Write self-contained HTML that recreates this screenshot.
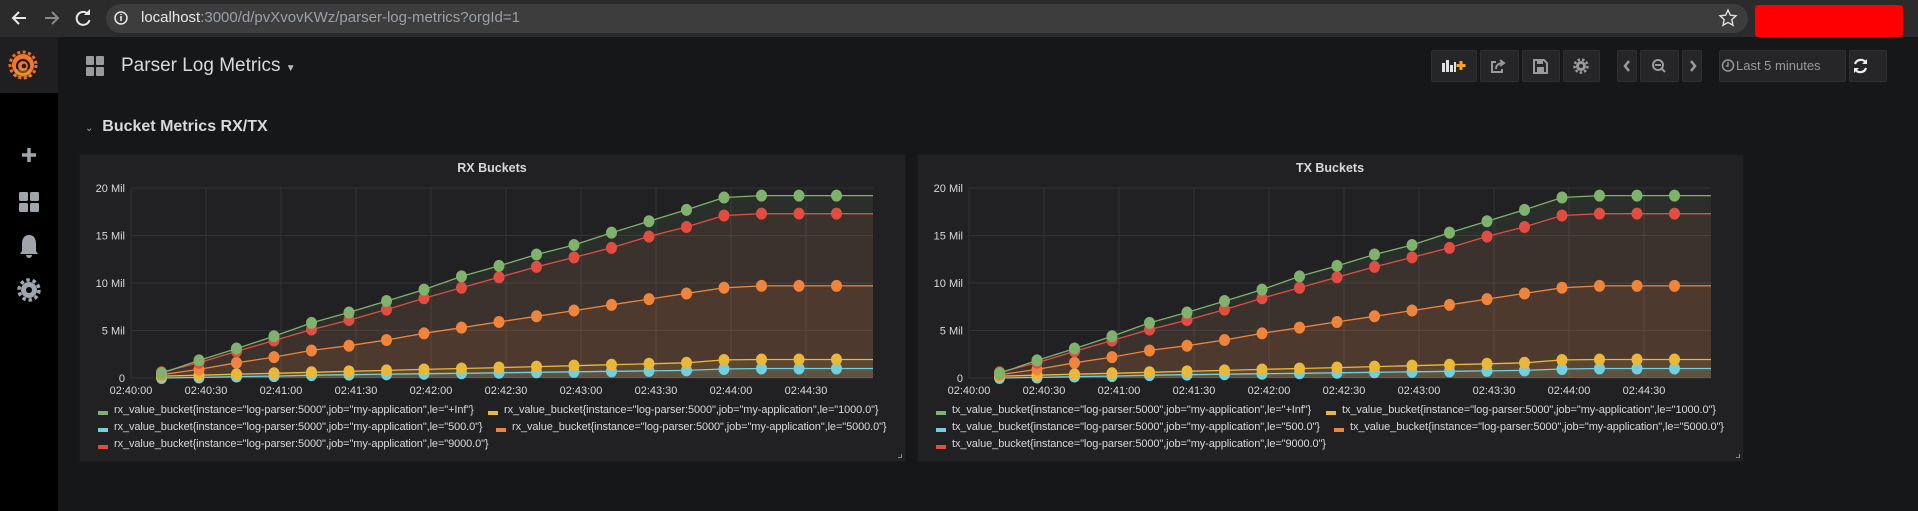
<!DOCTYPE html>
<html><head><meta charset="utf-8"><style>
*{margin:0;padding:0;box-sizing:border-box}
body{width:1918px;height:511px;overflow:hidden;background:#161719;font-family:"Liberation Sans",sans-serif;position:relative}
.abs{position:absolute}
.btn{position:absolute;top:50px;height:32px;background:#262628;border:1px solid #2f2f32;border-radius:2px}
</style></head><body>
<!-- browser bar -->
<div class="abs" style="left:0;top:0;width:1918px;height:37px;background:#2b2b2c"></div>
<div class="abs" style="left:106px;top:4px;width:1642px;height:29px;background:#3d3d3e;border-radius:15px"></div>
<svg class="abs" style="left:0;top:0" width="140" height="37">
<g stroke="#e8e8e8" stroke-width="2" fill="none"><path d="M26 18H13M19 12l-6 6 6 6"/></g>
<g stroke="#8a8a8a" stroke-width="2" fill="none"><path d="M45 18h13M52 12l6 6-6 6"/></g>
<path d="M88 14a6.5 6.5 0 1 0 1.5 6" stroke="#e8e8e8" stroke-width="2" fill="none"/><path d="M90 9v6h-6z" fill="#e8e8e8"/>
<circle cx="121" cy="18" r="6" stroke="#e8e8e8" stroke-width="1.5" fill="none"/><path d="M121 16v5M121 14v1" stroke="#e8e8e8" stroke-width="1.6"/>
</svg>
<div class="abs" style="left:141px;top:9px;font-size:15px;color:#9aa0a6"><span style="color:#e8e8e8">localhost</span>:3000/d/pvXvovKWz/parser-log-metrics?orgId=1</div>
<svg class="abs" style="left:1718px;top:8px" width="20" height="20"><path d="M10 2l2.4 5.2 5.6.6-4.2 3.8 1.2 5.6L10 14.4 5 17.2l1.2-5.6L2 7.8l5.6-.6z" stroke="#e0e0e0" stroke-width="1.4" fill="none"/></svg>
<div class="abs" style="left:1755px;top:5px;width:148px;height:32px;background:#f00;border-radius:3px"></div>
<!-- sidebar -->
<div class="abs" style="left:0;top:37px;width:58px;height:56px;background:#1f1f21"></div>
<div class="abs" style="left:0;top:93px;width:58px;height:418px;background:#000"></div>
<svg class="abs" style="left:8px;top:49px" width="30" height="32"><circle cx="15" cy="16" r="11" fill="#f2782b"/><circle cx="15" cy="16" r="13" fill="none" stroke="#f46b28" stroke-width="3" stroke-dasharray="3 2.5"/><circle cx="15" cy="17" r="6" fill="none" stroke="#1f1f21" stroke-width="2.2"/><circle cx="16" cy="17" r="2.3" fill="#1f1f21"/><rect x="7" y="20" width="16" height="8" fill="#fbb130" opacity=".35"/></svg>
<svg class="abs" style="left:0;top:130px" width="58" height="180">
<path d="M29 18v14M22 25h14" stroke="#9fa5ad" stroke-width="3.5"/>
<g fill="#9fa5ad"><rect x="19" y="62" width="9" height="9" rx="1.5"/><rect x="30" y="62" width="9" height="9" rx="1.5"/><rect x="19" y="73" width="9" height="9" rx="1.5"/><rect x="30" y="73" width="9" height="9" rx="1.5"/></g>
<path d="M29 105c-5 0-7 4-7 9v7l-2 3h18l-2-3v-7c0-5-2-9-7-9z" fill="#9fa5ad"/><path d="M26 125a3 3 0 0 0 6 0z" fill="#9fa5ad"/>
<circle cx="29" cy="160" r="8" fill="#9fa5ad"/><circle cx="29" cy="160" r="10" fill="none" stroke="#9fa5ad" stroke-width="3.5" stroke-dasharray="3.5 2.8"/><circle cx="29" cy="160" r="3" fill="#000"/>
</svg>
<!-- header -->
<svg class="abs" style="left:86px;top:56px" width="18" height="20"><g fill="#9a9a9a"><rect x="0" y="0" width="8" height="9" rx="1"/><rect x="10" y="0" width="8" height="9" rx="1"/><rect x="0" y="11" width="8" height="9" rx="1"/><rect x="10" y="11" width="8" height="9" rx="1"/></g></svg>
<div class="abs" style="left:121px;top:55px;font-size:19px;color:#d8d9da">Parser Log Metrics <span style="font-size:10px;color:#bbb">▼</span></div>
<div class="btn" style="left:1431px;width:46px"></div>
<div class="btn" style="left:1480px;width:39px"></div>
<div class="btn" style="left:1522px;width:38px"></div>
<div class="btn" style="left:1563px;width:37px"></div>
<div class="btn" style="left:1617px;width:20px"></div>
<div class="btn" style="left:1640px;width:39px"></div>
<div class="btn" style="left:1682px;width:20px"></div>
<div class="btn" style="left:1719px;width:127px"></div>
<div class="btn" style="left:1849px;width:38px"></div>
<svg class="abs" style="left:1430px;top:50px" width="460" height="32">
<g fill="#e0e0e0"><rect x="12" y="13" width="3" height="9"/><rect x="16" y="10" width="3" height="12"/><rect x="20" y="15" width="3" height="7"/><rect x="24" y="12" width="2" height="10"/></g>
<path d="M31 11v9M26.5 15.5h9" stroke="#f5a623" stroke-width="3"/>
<path d="M66 12h-4v10h10v-3M66 19c0-4 3-6 7-6M70 10l4 3-4 3" stroke="#9a9a9a" stroke-width="2" fill="none"/>
<path d="M104 10h10l3 3v10h-13z" stroke="#9a9a9a" stroke-width="2" fill="none"/><rect x="107" y="10" width="6" height="4" fill="#9a9a9a"/><rect x="107" y="17" width="7" height="5" fill="#9a9a9a"/>
<circle cx="151" cy="16" r="5" fill="#9a9a9a"/><circle cx="151" cy="16" r="6.5" fill="none" stroke="#9a9a9a" stroke-width="2.5" stroke-dasharray="2.5 2"/><circle cx="151" cy="16" r="2" fill="#262628"/>
<path d="M199 11l-4 5 4 5" stroke="#9a9a9a" stroke-width="2.5" fill="none"/>
<circle cx="228" cy="15" r="5" stroke="#9a9a9a" stroke-width="2" fill="none"/><path d="M225 15h6M231.5 18.5l3.5 3.5" stroke="#9a9a9a" stroke-width="2"/>
<path d="M261 11l4 5-4 5" stroke="#9a9a9a" stroke-width="2.5" fill="none"/>
<circle cx="298" cy="15.5" r="5.5" stroke="#9a9a9a" stroke-width="1.5" fill="none"/><path d="M298 12v4h-2" stroke="#9a9a9a" stroke-width="1.4" fill="none"/>
<path d="M436 13a6 6 0 0 0-11 1M425 19a6 6 0 0 0 11-1" stroke="#eee" stroke-width="2.2" fill="none"/><path d="M437 9v5h-5zM424 23v-5h5z" fill="#eee"/>
</svg>
<div class="abs" style="left:1736px;top:58px;font-size:13px;color:#9a9a9a">Last 5 minutes</div>
<!-- row -->
<div class="abs" style="left:85px;top:118px;font-size:16px;color:#d8d9da;font-weight:bold"><span style="font-size:10px;color:#aaa;font-weight:normal">⌄</span>&nbsp; Bucket Metrics RX/TX</div>
<div id="panels"></div>
<script>
var G=[0.5,1.85,3.1,4.4,5.8,6.9,8.1,9.3,10.7,11.8,13,14,15.3,16.5,17.7,19,19.2,19.2,19.2];
var R=[0.6,1.6,2.8,3.95,5.1,6.1,7.2,8.4,9.5,10.6,11.7,12.7,13.7,14.9,15.9,17.1,17.3,17.3,17.3];
var O=[0.35,0.9,1.6,2.2,2.9,3.4,4,4.7,5.3,5.9,6.5,7.1,7.7,8.3,8.9,9.5,9.7,9.7,9.7];
var Y=[0.2,0.3,0.4,0.5,0.6,0.7,0.8,0.9,1.0,1.1,1.2,1.3,1.4,1.5,1.6,1.9,1.95,1.95,1.95];
var B=[0,0.05,0.15,0.2,0.3,0.35,0.4,0.45,0.5,0.55,0.6,0.65,0.7,0.75,0.8,0.95,1.0,1.0,1.0];
var ser=[[G,'#7eb26d'],[R,'#e24d42'],[O,'#ef843c'],[Y,'#eab839'],[B,'#6ed0e0']];
function panel(px,pfx,title){
 var L=52,T=34,W=742,H=190; // plot relative to panel (panel x origin px)
 var s='<div class="abs" style="left:'+px+'px;top:154px;width:827px;height:308px;background:#212124;border:1px solid #1a1a1c"></div>';
 s+='<svg class="abs" style="left:'+px+'px;top:154px" width="827" height="308" font-family="Liberation Sans, sans-serif">';
 s+='<text x="413" y="18" fill="#d8d9da" font-size="12.5" font-weight="bold" text-anchor="middle">'+title+'</text>';
 for(var i=0;i<=4;i++){var y=T+H-i*H/4;s+='<line x1="'+L+'" x2="'+(L+W)+'" y1="'+y+'" y2="'+y+'" stroke="#333336"/>';
  s+='<text x="'+(L-6)+'" y="'+(y+4)+'" fill="#d8d9da" font-size="11" text-anchor="end">'+(i?i*5+' Mil':'0')+'</text>';}
 var lab=['02:40:00','02:40:30','02:41:00','02:41:30','02:42:00','02:42:30','02:43:00','02:43:30','02:44:00','02:44:30'];
 for(i=0;i<10;i++){var x=L+i*75;s+='<line x1="'+x+'" x2="'+x+'" y1="'+T+'" y2="'+(T+H)+'" stroke="#333336"/>';
  s+='<text x="'+x+'" y="'+(T+H+16)+'" fill="#d8d9da" font-size="11" text-anchor="middle">'+lab[i]+'</text>';}
 function X(k){return L+30.5+k*37.5} function Yv(v){return T+H-v*9.5}
 ser.forEach(function(a){var d='',pts=[];a[0].forEach(function(v,k){pts.push(X(k).toFixed(1)+','+Yv(v).toFixed(1))});
  pts.push((L+W)+','+Yv(a[0][18]).toFixed(1));
  s+='<polygon points="'+X(0)+','+(T+H)+' '+pts.join(' ')+' '+(L+W)+','+(T+H)+'" fill="'+a[1]+'" opacity="0.1"/>';});
 ser.slice().reverse().forEach(function(a){var pts=[];a[0].forEach(function(v,k){pts.push(X(k).toFixed(1)+','+Yv(v).toFixed(1))});
  pts.push((L+W)+','+Yv(a[0][18]).toFixed(1));
  s+='<polyline points="'+pts.join(' ')+'" fill="none" stroke="'+a[1]+'" stroke-width="1.3"/>';
  a[0].forEach(function(v,k){s+='<ellipse cx="'+X(k)+'" cy="'+Yv(v)+'" rx="5.5" ry="6" fill="'+a[1]+'"/>'});});
 s+='</svg>';
 var lg=[[19,258,'#7eb26d','le="+Inf"'],[409,258,'#eab839','le="1000.0"'],[19,275,'#6ed0e0','le="500.0"'],[417,275,'#ef843c','le="5000.0"'],[19,292,'#e24d42','le="9000.0"']];
 lg.forEach(function(l){s+='<div class="abs" style="left:'+(px+l[0])+'px;top:'+(154+l[1]-1)+'px;width:10px;height:4px;background:'+l[2]+'"></div>';
  s+='<div class="abs" style="left:'+(px+l[0]+16)+'px;top:'+(154+l[1]-8)+'px;font-size:11px;color:#d8d9da;white-space:nowrap;letter-spacing:-0.1px">'+pfx+'_value_bucket{instance="log-parser:5000",job="my-application",'+l[3]+'}</div>';});
 s+='<div class="abs" style="left:'+(px+819)+'px;top:454px;width:4px;height:4px;border-right:1px solid #888;border-bottom:1px solid #888"></div>';
 return s;}
document.getElementById('panels').innerHTML=panel(79,'rx','RX Buckets')+panel(917,'tx','TX Buckets');
</script>
</body></html>
